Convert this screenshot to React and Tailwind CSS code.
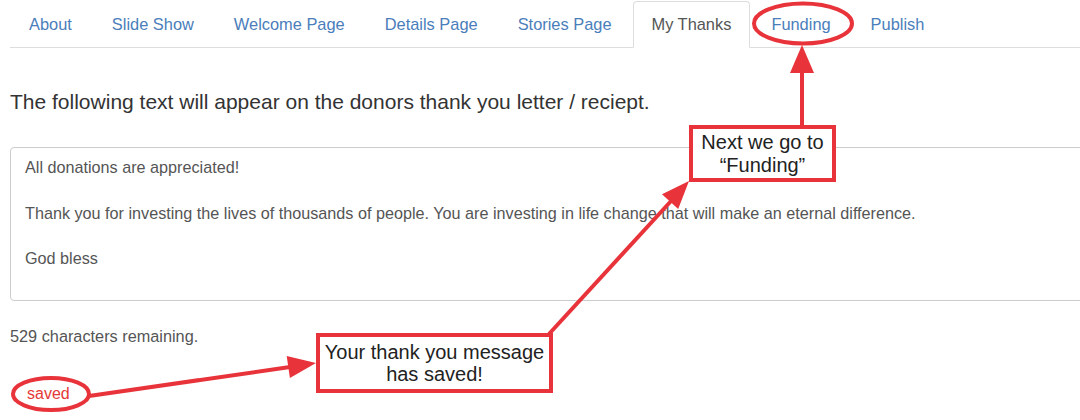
// Donation page editor - "My Thanks" tab with tutorial annotations
import { useState } from 'react';

const tabs = ['About', 'Slide Show', 'Welcome Page', 'Details Page', 'Stories Page', 'My Thanks', 'Funding', 'Publish'];

const mensaje = `All donations are appreciated!

Thank you for investing the lives of thousands of people. You are investing in life change that will make an eternal difference.

God bless`;

export default function App() {
  const [texto, setTexto] = useState(mensaje);
  const activo = 'My Thanks';

  return (
    <div className="relative w-[1080px] h-[420px] overflow-hidden bg-white font-['Liberation_Sans',Arial,sans-serif]">
      {/* Tabs */}
      <ul className="ml-[10px] flex border-b border-[#ddd] pt-[1px]">
        {tabs.map((tab) => (
          <li key={tab} className="mr-[2px] -mb-px">
            <a
              className={
                tab === activo
                  ? 'block h-[47px] px-[18px] leading-[45px] text-[16.4px] text-[#555] bg-white border border-[#ddd] border-b-white rounded-t-[4px]'
                  : 'block h-[47px] px-[18px] leading-[45px] text-[16.4px] text-[#4a7ebb] border border-transparent'
              }
            >
              {tab}
            </a>
          </li>
        ))}
      </ul>

      {/* Contenido */}
      <div className="pl-[10px]">
        <h3 className="mt-[41px] text-[21px] leading-[25px] text-[#333]">
          The following text will appear on the donors thank you letter / reciept.
        </h3>

        <textarea
          value={texto}
          onChange={(e) => setTexto(e.target.value)}
          className="mt-[33px] block w-[1100px] h-[154px] resize-none border border-[#ccc] rounded-[4px] pl-[14px] pt-[8px] text-[16.2px] leading-[22.8px] text-[#555] outline-none font-['Liberation_Sans',Arial,sans-serif]"
        />

        <p className="mt-[26px] text-[16.3px] leading-[18px] text-[#555]">529 characters remaining.</p>
        <p className="mt-[40px] ml-[17px] text-[16px] leading-[18px] text-[#e53935]">saved</p>
      </div>

      {/* Anotaciones */}
      <svg className="absolute inset-0 pointer-events-none" width="1080" height="420">
        <g fill="none" stroke="#e8333a" strokeWidth="4">
          <ellipse cx="803" cy="23.5" rx="49" ry="20" />
          <ellipse cx="51" cy="394" rx="38" ry="16" />
          <line x1="802" y1="125" x2="802" y2="70" />
          <line x1="549" y1="334" x2="672" y2="200" />
          <line x1="89" y1="396" x2="290" y2="367" />
        </g>
        <g fill="#e8333a">
          <polygon points="802,45 790,73 814,73" />
          <polygon points="689,181 678.2,209.1 662,194.3" />
          <polygon points="316,363 289.9,377.9 286.7,356.1" />
        </g>
      </svg>

      <div className="absolute left-[689px] top-[125px] w-[147px] h-[57px] border-4 border-[#e8333a] bg-white flex flex-col items-center justify-center text-[20px] leading-[23px] text-[#222]">
        <span>Next we go to</span>
        <span>“Funding”</span>
      </div>

      <div className="absolute left-[316px] top-[333px] w-[237px] h-[60px] border-4 border-[#e8333a] bg-white flex flex-col items-center justify-center text-[20px] leading-[22px] text-[#222]">
        <span>Your thank you message</span>
        <span>has saved!</span>
      </div>
    </div>
  );
}
